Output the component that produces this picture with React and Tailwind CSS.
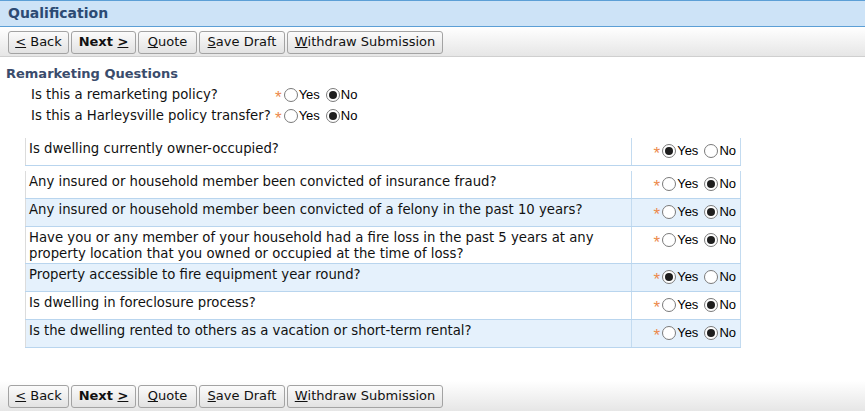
import React from "react";

const FONT = { fontFamily: '"DejaVu Sans", Verdana, sans-serif' };

const questions = [
  { text: "Any insured or household member been convicted of insurance fraud?", yes: false },
  { text: "Any insured or household member been convicted of a felony in the past 10 years?", yes: false, alt: true },
  {
    text: "Have you or any member of your household had a fire loss in the past 5 years at any property location that you owned or occupied at the time of loss?",
    yes: false,
  },
  { text: "Property accessible to fire equipment year round?", yes: true, alt: true },
  { text: "Is dwelling in foreclosure process?", yes: false },
  { text: "Is the dwelling rented to others as a vacation or short-term rental?", yes: false, alt: true },
];

function Radio({ checked }) {
  return (
    <span className="inline-flex h-[14px] w-[14px] shrink-0 items-center justify-center rounded-full border border-[#7a7a7a] bg-white">
      {checked && <span className="h-[8px] w-[8px] rounded-full bg-[#1e1e1e]" />}
    </span>
  );
}

function YesNo({ yes }) {
  return (
    <div className="flex h-[16px] items-center text-[13px] leading-[16px] text-black" style={{ fontFamily: '"Liberation Sans", Arial, sans-serif' }}>
      <span className="mr-[2px] translate-y-[3px] text-[17px] leading-[16px] text-[#ec8a4c]">*</span>
      <Radio checked={yes} />
      <span className="ml-[1px] mr-[6px]">Yes</span>
      <Radio checked={!yes} />
      <span className="ml-[1px]">No</span>
    </div>
  );
}

function Btn({ w, bold, children }) {
  return (
    <button
      className={`flex h-[23px] items-center justify-center rounded-[3px] border border-[#a3a3a3] bg-gradient-to-b from-[#fbfbfb] to-[#e2e2e2] text-[13px] text-[#111] ${w} ${bold ? "font-bold" : ""}`}
    >
      {children}
    </button>
  );
}

function Toolbar() {
  return (
    <div className="flex gap-[2px] pl-[8px]">
      <Btn w="w-[61px]">
        <u>&lt;</u>&nbsp;Back
      </Btn>
      <Btn w="w-[65px]" bold>
        Next&nbsp;<u>&gt;</u>
      </Btn>
      <Btn w="w-[59px]">
        <u>Q</u>uote
      </Btn>
      <Btn w="w-[86px]">
        <u>S</u>ave Draft
      </Btn>
      <Btn w="w-[156px]">
        <u>W</u>ithdraw Submission
      </Btn>
    </div>
  );
}

function Row({ q }) {
  return (
    <div className={`flex border-b border-[#b9d5ee] ${q.alt ? "bg-[#e5f1fc]" : "bg-white"}`}>
      <div className="min-h-[27px] flex-1 border-l border-[#dcdcdc] px-[3px] pt-[3px] pb-[1px] text-[13.25px] leading-[16px] text-[#111]">
        {q.text}
      </div>
      <div className="flex w-[110px] justify-end border-l border-r border-[#c3dbf0] pt-[5px] pr-[4px]">
        <YesNo yes={q.yes} />
      </div>
    </div>
  );
}

export default function App() {
  return (
    <div className="h-[415px] w-[865px] overflow-hidden bg-white" style={FONT}>
      {/* Title */}
      <div className="flex h-[27px] items-center border-t border-b border-[#5c9fd6] bg-[#cde3f7] pl-[8px]">
        <h1 className="text-[14px] font-bold text-[#2c4a73]">Qualification</h1>
      </div>

      {/* Top toolbar */}
      <div className="flex h-[30px] items-center border-b border-[#cfcfcf] bg-gradient-to-b from-white to-[#e6e6e6] pt-[1px]">
        <Toolbar />
      </div>

      <div className="pl-[6px] pt-[9px] text-[13px] font-bold leading-[16px] text-[#3a4c6c]">Remarketing Questions</div>

      <div className="mt-[5px] flex items-center pl-[31px] text-[13.25px] leading-[16px] text-[#111]">
        <span className="w-[244px]">Is this a remarketing policy?</span>
        <YesNo yes={false} />
      </div>
      <div className="mt-[5px] flex items-center pl-[31px] text-[13.25px] leading-[16px] text-[#111]">
        <span className="w-[244px] whitespace-nowrap">Is this a Harleysville policy transfer?</span>
        <YesNo yes={false} />
      </div>

      {/* Questions */}
      <div className="ml-[25px] mt-[14px] w-[716px]">
        <Row q={{ text: "Is dwelling currently owner-occupied?", yes: true }} />
        <div className="mt-[5px]">
          {questions.map((q, i) => (
            <Row key={i} q={q} />
          ))}
        </div>
      </div>

      {/* Bottom toolbar */}
      <div className="mt-[33px] flex h-[30px] items-center bg-gradient-to-b from-white to-[#e6e6e6]">
        <Toolbar />
      </div>
    </div>
  );
}
